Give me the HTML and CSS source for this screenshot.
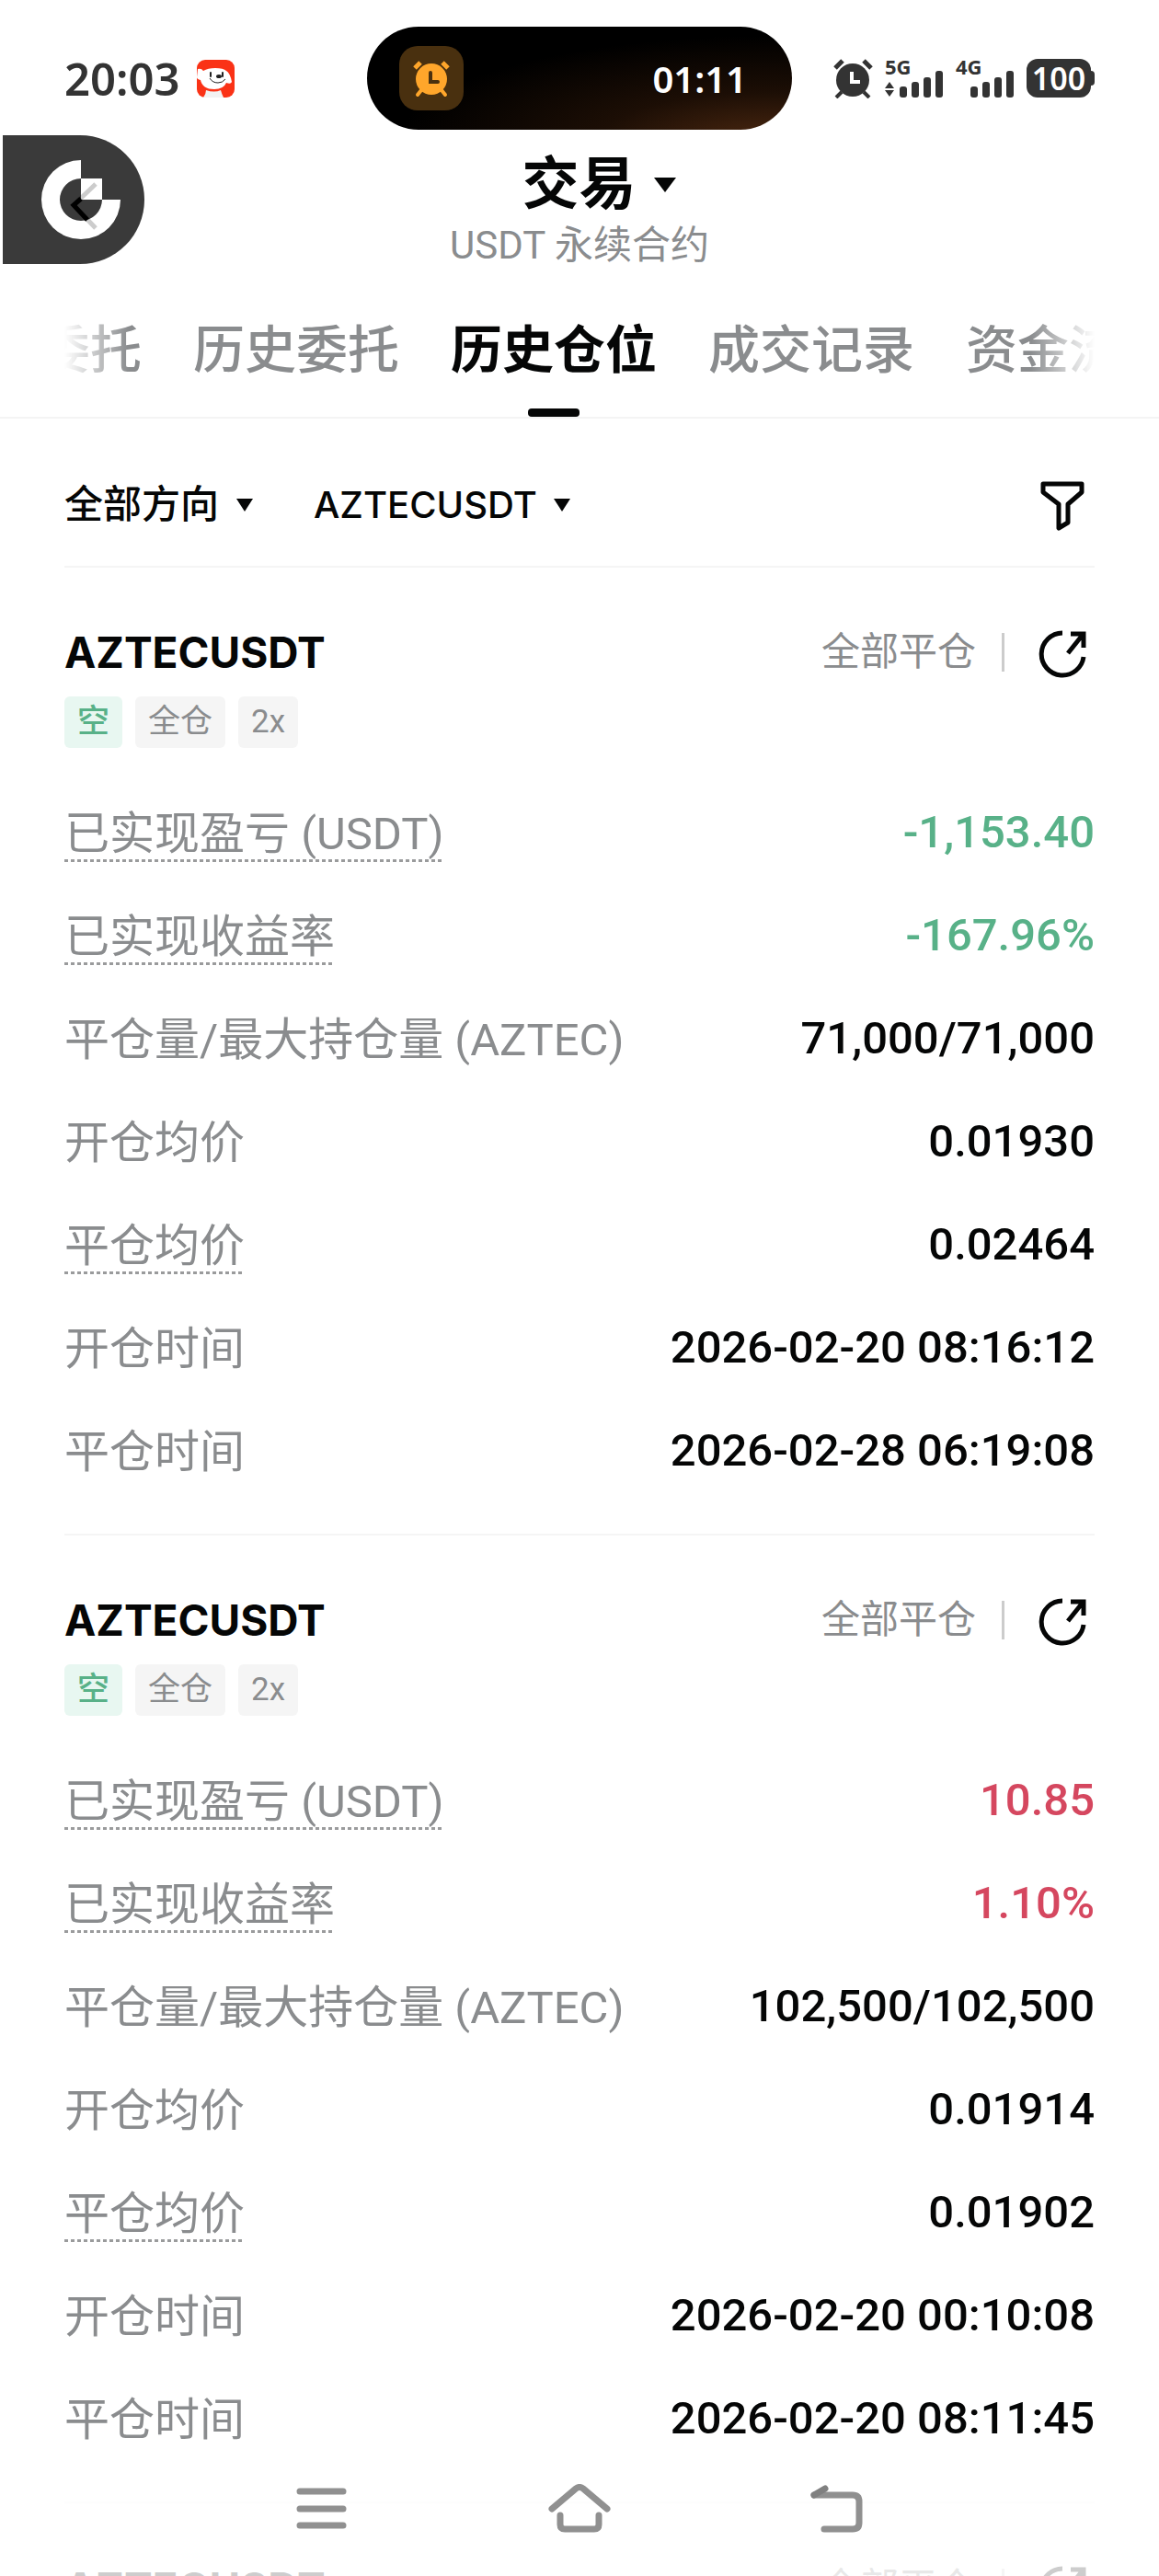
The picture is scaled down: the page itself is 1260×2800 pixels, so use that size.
FILE: index.html
```html
<!DOCTYPE html>
<html lang="zh-CN">
<head>
    <meta charset="UTF-8">
    <meta name="viewport" content="width=device-width, initial-scale=1.0">
    <title>交易</title>
    <link rel="stylesheet" href="styles.css">
</head>
<body>
<div class="app">

    <!-- Status bar -->
    <div class="status">
        <div class="status-left">
            <span class="clock">20:03</span>
            <svg class="mascot" viewBox="0 0 41 41" aria-hidden="true">
                <rect width="41" height="41" rx="9" fill="#fa3216"/>
                <path d="M1 10q4-1 6 2 5-3 13-3 9 0 12 3 4 2 6 12-1 3-6 1-3 7-13 7-13 0-15-10Q0 21 0 19z" fill="#fff"/>
                <path d="M7 41q3-4 3-8 9 3 16 0 1 4 3 8z" fill="#f2f2f2"/>
                <path d="M14 20q3 5 9 5 5 0 8-4" fill="none" stroke="#222" stroke-width="1"/>
                <path d="M15 14v4M28 14v4" stroke="#222" stroke-width="2" stroke-linecap="round"/>
                <ellipse cx="24" cy="18" rx="3" ry="2" fill="#222"/>
            </svg>
        </div>
        <div class="island">
            <span class="island-icon">
                <svg width="42" height="42" viewBox="0 0 42 42" aria-hidden="true">
                    <circle cx="21" cy="22" r="17" fill="#ffa62b"/>
                    <path d="M3 10l6-6M39 10l-6-6" stroke="#ffa62b" stroke-width="5"/>
                    <path d="M10 34l-4 5M32 34l4 5" stroke="#ffa62b" stroke-width="4" stroke-linecap="round"/>
                    <path d="M20 15v10h8" fill="none" stroke="#49300f" stroke-width="4" stroke-linecap="round"/>
                </svg>
            </span>
            <span class="timer">01:11</span>
        </div>
        <div class="status-right">
            <svg width="43" height="43" viewBox="0 0 43 43" aria-hidden="true">
                <circle cx="21" cy="23" r="18" fill="#333"/>
                <path d="M2 10l8-8M41 10l-8-8" stroke="#333" stroke-width="5"/>
                <path d="M9 36l-6 6M33 36l6 6" stroke="#333" stroke-width="4"/>
                <path d="M20 14v11h9" fill="none" stroke="#fff" stroke-width="4"/>
            </svg>
            <div class="signal">
                <span class="net">5G</span>
                <svg width="64" height="30" viewBox="0 0 64 30" aria-hidden="true">
                    <path d="M0 20l5-7 5 7zM0 22h10l-5 7z" fill="#333"/>
                    <g fill="#333">
                        <rect x="16" y="18" width="8" height="12" rx="3"/>
                        <rect x="29" y="13" width="8" height="17" rx="3"/>
                        <rect x="42" y="8" width="8" height="22" rx="3"/>
                        <rect x="55" y="1" width="8" height="29" rx="3"/>
                    </g>
                </svg>
            </div>
            <div class="signal">
                <span class="net">4G</span>
                <svg width="64" height="30" viewBox="0 0 64 30" aria-hidden="true">
                    <g fill="#333">
                        <rect x="16" y="18" width="8" height="12" rx="3"/>
                        <rect x="29" y="13" width="8" height="17" rx="3"/>
                        <rect x="42" y="8" width="8" height="22" rx="3"/>
                        <rect x="55" y="1" width="8" height="29" rx="3"/>
                    </g>
                </svg>
            </div>
            <span class="battery">100</span>
        </div>
    </div>

    <!-- Floating back bubble -->
    <button class="bubble" type="button" aria-label="返回">
        <svg width="154" height="140" viewBox="0 0 154 140" aria-hidden="true">
            <path d="M85 27a43 43 0 1 0 43 43h-20a23 23 0 1 1-23-23z" fill="#fff"/>
            <rect x="85" y="47" width="23" height="23" fill="#fff"/>
            <path d="M101 53l-24 23 24 25" fill="none" stroke="#000" stroke-opacity="0.2" stroke-width="5"/>
            <path d="M85 69l-8 7 15 16" fill="none" stroke="#000" stroke-width="5"/>
        </svg>
    </button>

    <!-- Page title -->
    <header class="header">
        <div class="dropdown title">
            <select aria-label="交易类型">
                <option>交易</option>
            </select>
        </div>
        <p class="subtitle">USDT 永续合约</p>
    </header>

    <nav class="tabs">
        <div class="tab-list">
            <a class="tab" href="#">委托</a>
            <a class="tab" href="#">历史委托</a>
            <a class="tab active" href="#">历史仓位</a>
            <a class="tab" href="#">成交记录</a>
            <a class="tab" href="#">资金流</a>
        </div>
    </nav>

    <main class="content">
        <div class="filters">
            <div class="dropdown">
                <select aria-label="方向">
                    <option>全部方向</option>
                </select>
            </div>
            <div class="dropdown symbol">
                <select aria-label="合约">
                    <option>AZTECUSDT</option>
                </select>
            </div>
            <button class="icon-btn filter-btn" type="button" aria-label="筛选">
                <svg width="56" height="56" viewBox="0 0 56 56" aria-hidden="true">
                    <path d="M6 5h42v9L33 27v20l-10 6V27L6 14z" fill="none" stroke="#050606" stroke-width="5" stroke-linejoin="round"/>
                </svg>
            </button>
        </div>

        <section class="card">
            <div class="card-head">
                <h2>AZTECUSDT</h2>
                <span class="state">全部平仓</span>
                <button class="icon-btn" type="button" aria-label="分享">
                    <svg width="56" height="56" viewBox="0 0 56 56" aria-hidden="true">
                        <path d="M27 7a23 23 0 1 0 23 26M33 29L49 9M36 8h14v15" fill="none" stroke="#050606" stroke-width="5"/>
                    </svg>
                </button>
            </div>
            <div class="tags">
                <span class="tag short">空</span>
                <span class="tag">全仓</span>
                <span class="tag">2x</span>
            </div>
            <dl class="rows">
                <div class="row"><dt class="hint">已实现盈亏 (USDT)</dt><dd class="green">-1,153.40</dd></div>
                <div class="row"><dt class="hint">已实现收益率</dt><dd class="green">-167.96%</dd></div>
                <div class="row"><dt>平仓量/最大持仓量 (AZTEC)</dt><dd>71,000/71,000</dd></div>
                <div class="row"><dt>开仓均价</dt><dd>0.01930</dd></div>
                <div class="row"><dt class="hint">平仓均价</dt><dd>0.02464</dd></div>
                <div class="row"><dt>开仓时间</dt><dd>2026-02-20 08:16:12</dd></div>
                <div class="row"><dt>平仓时间</dt><dd>2026-02-28 06:19:08</dd></div>
            </dl>
        </section>

        <section class="card">
            <div class="card-head">
                <h2>AZTECUSDT</h2>
                <span class="state">全部平仓</span>
                <button class="icon-btn" type="button" aria-label="分享">
                    <svg width="56" height="56" viewBox="0 0 56 56" aria-hidden="true">
                        <path d="M27 7a23 23 0 1 0 23 26M33 29L49 9M36 8h14v15" fill="none" stroke="#050606" stroke-width="5"/>
                    </svg>
                </button>
            </div>
            <div class="tags">
                <span class="tag short">空</span>
                <span class="tag">全仓</span>
                <span class="tag">2x</span>
            </div>
            <dl class="rows">
                <div class="row"><dt class="hint">已实现盈亏 (USDT)</dt><dd class="red">10.85</dd></div>
                <div class="row"><dt class="hint">已实现收益率</dt><dd class="red">1.10%</dd></div>
                <div class="row"><dt>平仓量/最大持仓量 (AZTEC)</dt><dd>102,500/102,500</dd></div>
                <div class="row"><dt>开仓均价</dt><dd>0.01914</dd></div>
                <div class="row"><dt class="hint">平仓均价</dt><dd>0.01902</dd></div>
                <div class="row"><dt>开仓时间</dt><dd>2026-02-20 00:10:08</dd></div>
                <div class="row"><dt>平仓时间</dt><dd>2026-02-20 08:11:45</dd></div>
            </dl>
        </section>

        <section class="card">
            <div class="card-head">
                <h2>AZTECUSDT</h2>
                <span class="state">全部平仓</span>
                <button class="icon-btn" type="button" aria-label="分享">
                    <svg width="56" height="56" viewBox="0 0 56 56" aria-hidden="true">
                        <path d="M27 7a23 23 0 1 0 23 26M33 29L49 9M36 8h14v15" fill="none" stroke="#050606" stroke-width="5"/>
                    </svg>
                </button>
            </div>
        </section>
    </main>

    <!-- System navigation, floats over the list -->
    <div class="sysnav">
        <button class="icon-btn" type="button" aria-label="最近任务">
            <svg width="68" height="54" viewBox="0 0 68 54" aria-hidden="true">
                <path d="M10 8h47M10 27h47M10 45h47" stroke="#909090" stroke-width="7" stroke-linecap="round"/>
            </svg>
        </button>
        <button class="icon-btn" type="button" aria-label="主屏幕">
            <svg width="68" height="54" viewBox="0 0 68 54" fill="none" stroke="#909090" stroke-width="7" stroke-linecap="round" aria-hidden="true">
                <path d="M4 27L30 5q4-3 8 0l26 22"/>
                <path d="M13 34v10q0 5 5 5h32q5 0 5-5V34"/>
            </svg>
        </button>
        <button class="icon-btn" type="button" aria-label="返回">
            <svg width="68" height="54" viewBox="0 0 68 54" fill="none" stroke="#909090" stroke-width="7" stroke-linecap="round" aria-hidden="true">
                <path d="M9 12h42q7 0 7 7v23q0 7-7 7H20"/>
                <path d="M9 12l12-7" stroke="#808080"/>
            </svg>
        </button>
    </div>
</div>
</body>
</html>
```

FILE: styles.css
```css
* {
    box-sizing: border-box;
}

body {
    margin: 0;
    background-color: #fff;
    color: #050606;
    font-family: Roboto, "Noto Sans CJK SC", sans-serif;
}

button,
select {
    margin: 0;
    padding: 0;
    border: none;
    background: none;
    color: inherit;
    font: inherit;
    cursor: pointer;
}

svg {
    display: block;
    flex: none;
}

.app {
    position: relative;
    height: 100vh;
    overflow: hidden;
}

/* status bar */
.status {
    display: grid;
    grid-template-columns: 1fr 462px 1fr;
    align-items: center;
    padding: 29px 70px 0;
    font-family: "Noto Sans", sans-serif;
    color: #333;
}

.status-left {
    display: flex;
    align-items: center;
    gap: 18px;
}

.clock {
    font-size: 49px;
    font-weight: 600;
    line-height: 56px;
}

.mascot {
    width: 41px;
    height: 41px;
}

.island {
    display: flex;
    align-items: center;
    justify-content: space-between;
    height: 112px;
    padding: 0 49px 0 35px;
    border-radius: 56px;
    background: radial-gradient(ellipse at 95% 110%, #4a2710, #1c0e05 30%, #000 65%);
    color: #fff;
}

.island-icon {
    display: flex;
    align-items: center;
    justify-content: center;
    width: 70px;
    height: 70px;
    border-radius: 20px;
    background-color: #49300f;
}

.timer {
    font-size: 40px;
    font-weight: 600;
}

.status-right {
    display: flex;
    align-items: center;
    justify-content: flex-end;
    gap: 13px;
}

.signal {
    display: flex;
    flex-direction: column;
}

.net {
    height: 12px;
    font-size: 22px;
    font-weight: 700;
    line-height: 16px;
}

.battery {
    position: relative;
    width: 70px;
    height: 42px;
    margin-right: 4px;
    border-radius: 12px;
    background-color: #333;
    color: #fff;
    font-size: 34px;
    font-weight: 600;
    line-height: 42px;
    text-align: center;
}

.battery::after {
    content: "";
    position: absolute;
    top: 13px;
    right: -4px;
    width: 6px;
    height: 16px;
    border-radius: 0 4px 4px 0;
    background-color: #333;
}

.bubble {
    position: absolute;
    top: 147px;
    left: 3px;
    border-radius: 0 70px 70px 0;
    background-color: #3a3a3a;
}

/* drop-downs */
.dropdown {
    display: flex;
    align-items: center;
    gap: 18px;
}

.dropdown select {
    appearance: none;
    height: 56px;
    font-size: 42px;
    font-weight: 500;
    line-height: 56px;
}

.dropdown::after {
    content: "";
    border: 9px solid transparent;
    border-top: 14px solid #050606;
    border-bottom: none;
}

.symbol select {
    font-family: Inter, sans-serif;
    font-size: 40px;
}

/* header */
.header {
    display: flex;
    flex-direction: column;
    align-items: center;
    padding-top: 24px;
}

/* left padding balances the arrow so the text stays centred */
.title {
    padding-left: 42px;
}

.title select {
    height: 72px;
    font-size: 62px;
    font-weight: 700;
    line-height: 72px;
}

.title::after {
    border-width: 16px 12px 0;
}

.subtitle {
    margin: 4px 0 0;
    color: #8a8c8e;
    font-size: 42px;
    line-height: 52px;
}

.tabs {
    padding: 0 70px;
    border-bottom: 2px solid #f4f4f4;
}

.tab-list {
    display: flex;
    justify-content: center;
    gap: 56px;
    padding-top: 48px;
    overflow: hidden;
    mask-image: linear-gradient(90deg, transparent, #000 70px, #000 calc(100% - 70px), transparent);
}

.tab {
    position: relative;
    flex: none;
    padding-bottom: 32px;
    color: #8a8c8e;
    font-size: 56px;
    font-weight: 500;
    line-height: 80px;
    text-decoration: none;
}

.tab.active {
    color: #050606;
    font-weight: 700;
}

.tab.active::after {
    content: "";
    position: absolute;
    bottom: 0;
    left: 50%;
    width: 56px;
    height: 9px;
    margin-left: -28px;
    border-radius: 4px;
    background-color: #050606;
}

/* list */
.content {
    padding: 0 70px;
}

.filters {
    display: flex;
    align-items: center;
    gap: 66px;
    padding: 66px 0 38px;
    border-bottom: 2px solid #f5f5f5;
}

.icon-btn {
    display: flex;
    justify-content: center;
}

.filter-btn {
    margin-left: auto;
    margin-right: 6px;
}

.card {
    padding: 64px 0 34px;
    border-bottom: 2px solid #f5f5f5;
}

.card-head {
    display: flex;
    align-items: center;
}

.card-head h2 {
    margin: 0 auto 0 0;
    font-family: Inter, sans-serif;
    font-size: 46px;
    font-weight: 700;
    line-height: 56px;
}

.state {
    padding-right: 28px;
    border-right: 3px solid #ccc;
    color: #8a8c8e;
    font-size: 42px;
    line-height: 42px;
}

.card-head .icon-btn {
    margin: 0 6px 0 36px;
}

.tags {
    display: flex;
    gap: 14px;
    margin-top: 20px;
}

.tag {
    padding: 0 14px;
    border-radius: 6px;
    background-color: #f5f5f5;
    color: #8a8c8e;
    font-size: 35px;
    line-height: 56px;
}

.tag.short {
    background-color: #e8f7f1;
    color: #58b188;
    font-weight: 500;
}

.rows {
    margin: 36px 0 0;
}

.row {
    display: flex;
    align-items: center;
    justify-content: space-between;
    height: 112px;
    font-size: 49px;
    line-height: 60px;
}

.row dt {
    padding-top: 4px;
    color: #8a8c8e;
}

.row .hint {
    background: repeating-linear-gradient(90deg, #9a9b9c 0 4px, transparent 4px 7px) left bottom / 100% 3px no-repeat;
}

.row dd {
    margin: 0;
    font-weight: 500;
}

.row .green {
    color: #58b188;
}

.row .red {
    color: #d5475f;
}

.sysnav {
    position: absolute;
    right: 0;
    bottom: 0;
    left: 0;
    display: grid;
    grid-template-columns: repeat(3, 1fr);
    align-items: center;
    height: 146px;
    padding: 0 210px;
    background-color: rgba(255, 255, 255, 0.8);
}
```
